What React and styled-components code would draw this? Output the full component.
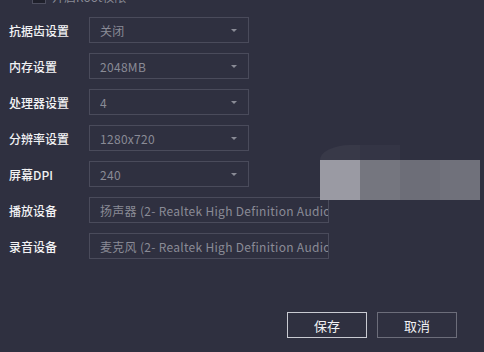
import React from 'react'
import styled, { createGlobalStyle } from 'styled-components'

const GlobalStyle = createGlobalStyle`
    html, body {
        margin: 0;
        padding: 0;
        background: #2f3040;
    }
    body {
        font-family: "Noto Sans CJK SC", "Noto Sans", sans-serif;
    }
`;

const Page = styled.div`
    position: relative;
    width: 484px;
    height: 352px;
    overflow: hidden;
    background: #2f3040;
`;

const TopRow = styled.div`
    display: flex;
    align-items: center;
    gap: 6px;
    height: 16px;
    margin-top: -11px;
    padding-left: 32px;
`;

const CheckBox = styled.span`
    width: 14px;
    height: 14px;
    box-sizing: border-box;
    border: 1px solid #4d4e5e;
    background: #1f202b;
`;

const CheckLabel = styled.span`
    font-size: 12px;
    color: #8a8b96;
    line-height: 16px;
`;

const Form = styled.div`
    display: flex;
    flex-direction: column;
    gap: 10px;
    margin-top: 12px;
    padding-left: 9px;
`;

const Row = styled.div`
    display: flex;
    align-items: center;
    height: 26px;
`;

const Label = styled.span`
    width: 80px;
    font-size: 12px;
    font-weight: 500;
    color: #f2f2f4;
    white-space: nowrap;
`;

const Field = styled.div`
    display: flex;
    align-items: center;
    box-sizing: border-box;
    width: ${p => (p.wide ? '240px' : '160px')};
    height: 26px;
    padding: ${p => (p.wide ? '0 0 0 10px' : '0 10px')};
    border: 1px solid #4a4b5b;
    overflow: hidden;
`;

const Value = styled.span`
    flex: 1;
    font-size: 12px;
    letter-spacing: 0.3px;
    color: #8a8b96;
    white-space: nowrap;
    overflow: hidden;
`;

const Arrow = styled.span`
    width: 0;
    height: 0;
    margin-right: 1px;
    border-left: 3px solid transparent;
    border-right: 3px solid transparent;
    border-top: 3px solid #8a8b96;
`;

const Footer = styled.div`
    display: flex;
    justify-content: flex-end;
    gap: 10px;
    margin-top: 53px;
    padding-right: 27px;
`;

const Button = styled.button`
    width: 80px;
    height: 26px;
    box-sizing: border-box;
    border: 1px solid ${p => (p.primary ? '#c9cad2' : '#6c6d7a')};
    background: transparent;
    color: #f2f2f4;
    font-family: "Noto Sans CJK SC", sans-serif;
    font-size: 13px;
    padding: 0;
`;

// pixelated blur patch sitting over the right side of the form
const Mosaic = styled.div`
    position: absolute;
    left: 320px;
    top: 145px;
    width: 160px;
    height: 55px;
    display: grid;
    grid-template-columns: repeat(4, 1fr);
    grid-template-rows: 15px 40px;
`;

const Cell = styled.div`
    background: ${p => p.color};
    border-top-left-radius: ${p => (p.round ? '30px 15px' : '0')};
`;

const rows = [
    { label: '抗据齿设置', value: '关闭' },
    { label: '内存设置', value: '2048MB' },
    { label: '处理器设置', value: '4' },
    { label: '分辨率设置', value: '1280x720' },
    { label: '屏幕DPI', value: '240' },
    { label: '播放设备', value: '扬声器 (2- Realtek High Definition Audio)', wide: true },
    { label: '录音设备', value: '麦克风 (2- Realtek High Definition Audio)', wide: true },
];

export default function App() {
    return (
        <Page>
            <GlobalStyle />
            <TopRow>
                <CheckBox />
                <CheckLabel>开启Root权限</CheckLabel>
            </TopRow>
            <Form>
                {rows.map(r => (
                    <Row key={r.label}>
                        <Label>{r.label}</Label>
                        <Field wide={r.wide}>
                            <Value>{r.value}</Value>
                            {!r.wide && <Arrow />}
                        </Field>
                    </Row>
                ))}
            </Form>
            <Footer>
                <Button primary>保存</Button>
                <Button>取消</Button>
            </Footer>
            <Mosaic>
                <Cell color="#383948" round />
                <Cell color="#343545" />
                <Cell color="#2f3040" />
                <Cell color="#2f3040" />
                <Cell color="#9a9aa3" />
                <Cell color="#75767f" />
                <Cell color="#6d6e78" />
                <Cell color="#70717b" />
            </Mosaic>
        </Page>
    )
}
